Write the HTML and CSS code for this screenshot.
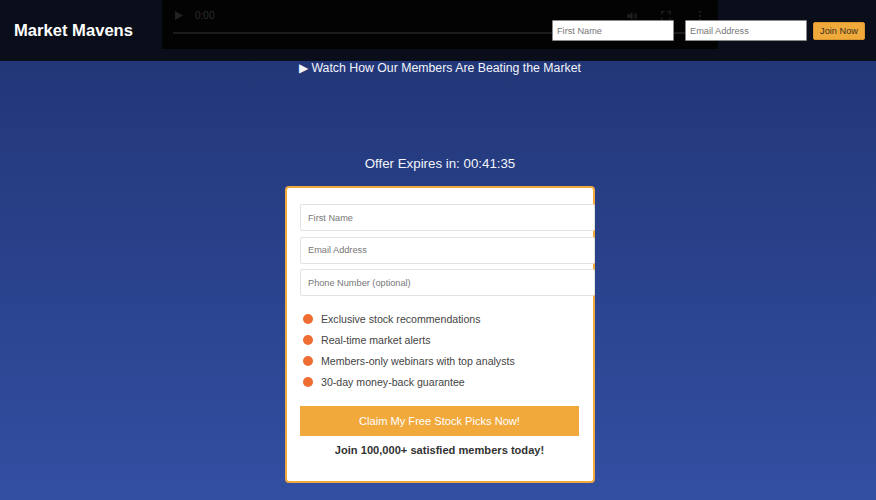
FILE: index.html
```html
<!DOCTYPE html>
<html lang="en">
<head>
<meta charset="utf-8">
<title>Market Mavens</title>
<link rel="stylesheet" href="styles.css">
</head>
<body>
<header class="site-header">
  <div class="logo">Market Mavens</div>
  <div class="video-box" aria-label="video">
    <div class="vc-top">
      <svg class="vc-play" width="8" height="9" viewBox="0 0 8 9"><path d="M0 0 L8 4.5 L0 9 Z" fill="#222"/></svg>
      <span class="vc-time">0:00</span>
      <span class="vc-spacer"></span>
      <svg class="vc-icon" width="11" height="10" viewBox="0 0 11 10"><path d="M0 3.5 H2.5 L5.5 1 V9 L2.5 6.5 H0 Z" fill="#202020"/><path d="M7 3 Q8.5 5 7 7" stroke="#202020" stroke-width="1.2" fill="none"/><path d="M8.3 1.8 Q10.6 5 8.3 8.2" stroke="#202020" stroke-width="1.2" fill="none"/></svg>
      <svg class="vc-icon fs" width="10" height="10" viewBox="0 0 10 10"><path d="M0.7 3.5 V0.7 H3.5 M6.5 0.7 H9.3 V3.5 M9.3 6.5 V9.3 H6.5 M3.5 9.3 H0.7 V6.5" stroke="#202020" stroke-width="1.3" fill="none"/></svg>
      <svg class="vc-icon more" width="4" height="10" viewBox="0 0 4 10"><circle cx="2" cy="1.2" r="1.1" fill="#202020"/><circle cx="2" cy="5" r="1.1" fill="#202020"/><circle cx="2" cy="8.8" r="1.1" fill="#202020"/></svg>
    </div>
    <div class="vc-bar"></div>
  </div>
  <form class="header-form">
    <input class="h-input" type="text" placeholder="First Name">
    <input class="h-input" type="email" placeholder="Email Address">
    <button class="h-btn" type="button">Join Now</button>
  </form>
</header>
<main class="main">
  <p class="watch">&#9654; Watch How Our Members Are Beating the Market</p>
  <p class="timer">Offer Expires in: 00:41:35</p>
  <section class="card">
    <input class="c-input" type="text" placeholder="First Name">
    <input class="c-input" type="email" placeholder="Email Address">
    <input class="c-input" type="tel" placeholder="Phone Number (optional)">
    <ul class="benefits">
      <li>Exclusive stock recommendations</li>
      <li>Real-time market alerts</li>
      <li>Members-only webinars with top analysts</li>
      <li>30-day money-back guarantee</li>
    </ul>
    <button class="cta" type="button">Claim My Free Stock Picks Now!</button>
    <p class="social">Join 100,000+ satisfied members today!</p>
  </section>
</main>
</body>
</html>
```

FILE: styles.css
```css
* { box-sizing: border-box; }
html, body { margin: 0; padding: 0; }
body {
  font-family: "Liberation Sans", Arial, sans-serif;
  min-height: 500px;
  background: linear-gradient(180deg, #1f3370 0%, #24397c 20%, #334fa2 100%);
  color: #fff;
  overflow: hidden;
}
.site-header {
  position: relative;
  height: 61px;
  background: #0a0e1a;
  display: flex;
  align-items: center;
  padding: 0 11px 0 14px;
}
.logo {
  font-size: 16.6px;
  font-weight: bold;
  color: #fff;
  margin-top: 1px;
}
.video-box {
  position: absolute;
  left: 162px;
  top: 0;
  width: 556px;
  height: 49px;
  background: #030303;
  padding: 0 11px;
}
.vc-top {
  display: flex;
  align-items: center;
  height: 31px;
  padding-left: 2px;
}
.vc-time {
  font-size: 10px;
  color: #2c2c2c;
  margin-left: 12px;
}
.vc-spacer { flex: 1; }
.vc-icon { display: block; }
.vc-icon.fs { margin-left: 23px; }
.vc-icon.more { margin-left: 27px; margin-right: 5px; }
.vc-bar {
  height: 2px;
  background: #1c1c1c;
  margin-top: 1px;
}
.header-form {
  position: relative;
  margin-left: auto;
  display: flex;
  align-items: center;
}
.h-input {
  width: 122px;
  height: 21px;
  margin: 0 0 0 11px;
  padding: 1px 4px;
  font-family: "Liberation Sans", Arial, sans-serif;
  font-size: 9.2px;
  border: 1px solid #8a8a8a;
  border-radius: 1px;
  background: #fff;
  color: #333;
}
.h-input::placeholder { color: #777; }
.h-input + .h-input { margin-left: 11px; }
.h-btn {
  margin-left: 6px;
  width: 52px;
  height: 18px;
  padding: 0;
  font-family: "Liberation Sans", Arial, sans-serif;
  font-size: 9.2px;
  color: #3a3020;
  background: #f0a93b;
  border: 1px solid #d8962f;
  border-radius: 2px;
}
.main {
  padding-left: 4px;
  display: flex;
  flex-direction: column;
  align-items: center;
}
.watch {
  margin: 0;
  font-size: 12.3px;
  line-height: 15px;
  height: 15px;
  color: #f2f4fa;
}
.timer {
  margin: 79px 0 0;
  font-size: 13.3px;
  line-height: 17px;
  color: #f2f4fa;
}
.card {
  margin-top: 14px;
  width: 310px;
  background: #fff;
  border: 2px solid #f1a93c;
  border-radius: 4px;
  padding: 16px 14px 24px 13px;
  color: #333;
}
.c-input {
  display: block;
  width: calc(100% + 16px);
  height: 27px;
  margin: 0 0 5.5px;
  padding: 0 7px;
  font-family: "Liberation Sans", Arial, sans-serif;
  font-size: 9.2px;
  border: 1px solid #e2e2e2;
  border-radius: 2px;
  background: #fff;
}
.c-input::placeholder { color: #777; }
.benefits {
  list-style: none;
  margin: 12px 0 0;
  padding: 0;
}
.benefits li {
  display: flex;
  align-items: center;
  height: 21px;
  font-size: 10.6px;
  color: #444;
}
.benefits li::before {
  content: "";
  width: 10px;
  height: 10px;
  border-radius: 50%;
  background: #ef6d33;
  margin: 0 8px 0 3px;
  flex: none;
}
.cta {
  display: block;
  width: 100%;
  height: 30px;
  margin-top: 14px;
  padding: 0;
  border: 0;
  background: #f1a93c;
  color: #fff;
  font-family: "Liberation Sans", Arial, sans-serif;
  font-size: 11.1px;
}
.social {
  margin: 7px 0 0;
  text-align: center;
  font-size: 11.1px;
  line-height: 14px;
  font-weight: bold;
  color: #333;
}
```
